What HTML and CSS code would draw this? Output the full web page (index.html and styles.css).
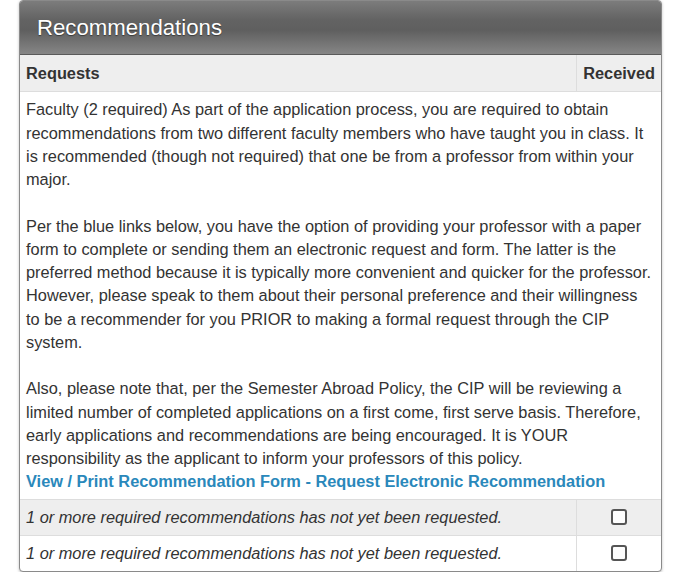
FILE: index.html
```html
<!DOCTYPE html>
<html>
<head>
<meta charset="utf-8">
<link rel="stylesheet" href="styles.css">
</head>
<body>
<div class="panel">
  <div class="panel-head">Recommendations</div>
  <table class="rec-table">
    <thead>
      <tr>
        <th class="col-req">Requests</th>
        <th class="col-rcv">Received</th>
      </tr>
    </thead>
    <tbody>
      <tr>
        <td colspan="2" class="desc">Faculty (2 required) As part of the application process, you are required to obtain recommendations from two different faculty members who have taught you in class. It is recommended (though not required) that one be from a professor from within your major.<br><br>Per the blue links below, you have the option of providing your professor with a paper form to complete or sending them an electronic request and form. The latter is the preferred method because it is typically more convenient and quicker for the professor. However, please speak to them about their personal preference and their willingness to be a recommender for you PRIOR to making a formal request through the CIP system.<br><br>Also, please note that, per the Semester Abroad Policy, the CIP will be reviewing a limited number of completed applications on a first come, first serve basis. Therefore, early applications and recommendations are being encouraged. It is YOUR responsibility as the applicant to inform your professors of this policy.<br><a class="link" href="#">View / Print Recommendation Form</a><span class="link"> - </span><a class="link" href="#">Request Electronic Recommendation</a></td>
      </tr>
      <tr class="stripe">
        <td class="note">1 or more required recommendations has not yet been requested.</td>
        <td class="chk"><span class="box"></span></td>
      </tr>
      <tr>
        <td class="note">1 or more required recommendations has not yet been requested.</td>
        <td class="chk"><span class="box"></span></td>
      </tr>
    </tbody>
  </table>
</div>
</body>
</html>
```
FILE: styles.css
```css
html, body {
  margin: 0;
  padding: 0;
  background: #ffffff;
}
body {
  font-family: "Liberation Sans", Arial, Helvetica, sans-serif;
  color: #333333;
}
.panel {
  margin: 0 0 0 19px;
  width: 641px;
  border: 1px solid #8a8a8a;
  border-radius: 4px;
  overflow: hidden;
  box-shadow: 0 1px 3px rgba(0,0,0,0.25);
  background: #fff;
}
.panel-head {
  height: 54px;
  box-sizing: border-box;
  padding: 0 0 0 17px;
  display: flex;
  align-items: center;
  font-size: 22.2px;
  color: #ffffff;
  text-shadow: 0 1px 1px rgba(0,0,0,0.45);
  background: linear-gradient(to bottom, #7c7c7c 0%, #636363 35%, #5f5f5f 55%, #868686 100%);
  border-bottom: 1px solid #5a5a5a;
}
.rec-table {
  width: 100%;
  border-collapse: collapse;
  font-size: 16.35px;
  line-height: 23.25px;
}
.rec-table th {
  background: #eeeeee;
  font-weight: bold;
  text-align: left;
  padding: 7px 6px 6px 6px;
  border-bottom: 1px solid #dddddd;
}
.rec-table th.col-rcv {
  width: 71px;
  text-align: center;
  border-left: 1px solid #dddddd;
}
.rec-table td {
  padding: 6px 6px;
  vertical-align: middle;
}
.rec-table td.desc {
  padding: 6px 6px 5px 6px;
}
.rec-table tr.stripe td {
  background: #eeeeee;
}
.rec-table td.note {
  font-style: italic;
  border-top: 1px solid #dddddd;
}
.rec-table td.chk {
  border-top: 1px solid #dddddd;
  border-left: 1px solid #dddddd;
  text-align: center;
}
.box {
  display: inline-block;
  width: 12px;
  height: 12px;
  border: 2px solid #555555;
  border-radius: 3px;
  background: #fdfdfd;
  vertical-align: middle;
  position: relative;
  top: -1px;
}
.link {
  color: #2a88bb;
  font-weight: bold;
  text-decoration: none;
}
```
